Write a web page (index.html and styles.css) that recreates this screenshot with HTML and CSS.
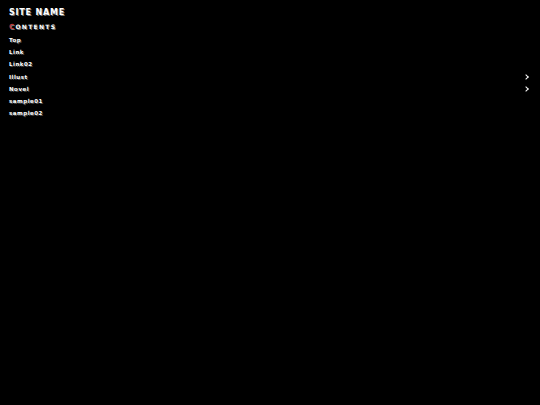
FILE: index.html
```html
<!DOCTYPE html>
<html lang="ja">
<head>
    <meta charset="UTF-8" />
    <meta name="viewport" content="width=device-width, initial-scale=1.0"/>
    <title>SITE NAME</title>
    <link rel="stylesheet" href="styles.css">
</head>
<body>
    <div class="side">
        <h1 class="site-name">SITE NAME</h1>
        <h2 class="contents"><span class="first">C</span>ONTENTS</h2>
        <ul class="menu">
            <li><a href="#">Top</a></li>
            <li><a href="#">Link</a></li>
            <li><a href="#">Link02</a></li>
            <li class="has-sub"><a href="#">Illust</a></li>
            <li class="has-sub"><a href="#">Novel</a></li>
            <li><a href="#">sample01</a></li>
            <li><a href="#">sample02</a></li>
        </ul>
    </div>
</body>
</html>
```

FILE: styles.css
```css
body {
    margin: 0;
    background-color: #000;
    color: #fff;
    font-family: "DejaVu Sans", sans-serif;
    height: 405px;
}
.side {
    padding: 8px 9px 0 9px;
}
.site-name {
    margin: 0;
    font-size: 8px;
    font-weight: bold;
    letter-spacing: 0.8px;
    line-height: 10px;
    text-shadow: 1px 1px 0 #777;
}
.contents {
    margin: 4px 0 2px 0;
    font-size: 6px;
    font-weight: bold;
    letter-spacing: 1.3px;
    line-height: 10px;
    text-shadow: 1px 1px 0 #777;
}
.first {
    color: #c23a3a;
    font-size: 7px;
}
.menu {
    list-style: none;
    margin: 0;
    padding: 0;
}
.menu li {
    height: 12.2px;
    line-height: 12px;
    font-size: 5.5px;
    font-weight: bold;
    letter-spacing: 0.5px;
    position: relative;
}
.menu a {
    color: #fff;
    text-decoration: none;
    text-shadow: 1px 1px 0 #555;
}
.has-sub::after {
    content: "";
    position: absolute;
    right: 3px;
    top: 4px;
    width: 3px;
    height: 3px;
    border-top: 1px solid #fff;
    border-right: 1px solid #fff;
    transform: rotate(45deg);
}
```
